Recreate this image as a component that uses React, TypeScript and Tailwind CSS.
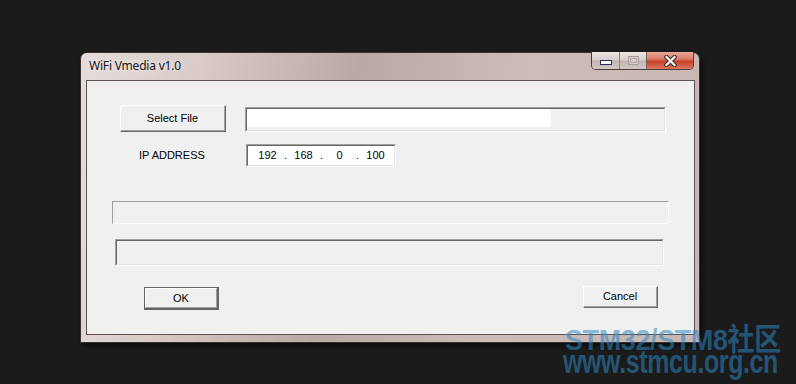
import React from "react";

const ctl = { fontFamily: '"Liberation Sans", Arial, sans-serif' };

function Btn({ label, w, h, isDefault }: { label: string; w: string; h: string; isDefault?: boolean }) {
  if (isDefault) {
    return (
      <div className={`${w} ${h} border border-[#646464] border-r-2 border-b-2 flex`}>
        <div className="flex-1 flex items-center justify-center border-t border-l border-t-white border-l-white border-r border-b border-r-[#a0a0a0] border-b-[#a0a0a0] bg-[#f0f0f0] text-[11px] text-black">
          {label}
        </div>
      </div>
    );
  }
  return (
    <div className={`${w} ${h} flex border-t border-l border-t-white border-l-white border-r border-b border-r-[#696969] border-b-[#696969]`}>
      <div className="flex-1 flex items-center justify-center border-r border-b border-r-[#a0a0a0] border-b-[#a0a0a0] bg-[#f0f0f0] text-[11px] text-black">
        {label}
      </div>
    </div>
  );
}

function Sunken({ className, inner, children }: { className: string; inner: string; children?: React.ReactNode }) {
  return (
    <div className={`${className} flex border-t border-l border-t-[#a0a0a0] border-l-[#a0a0a0] border-r border-b border-r-white border-b-white`}>
      <div className={`flex-1 flex border-t border-l border-t-[#696969] border-l-[#696969] border-r border-b border-r-[#e3e3e3] border-b-[#e3e3e3] ${inner}`}>
        {children}
      </div>
    </div>
  );
}

export default function App() {
  return (
    <div className="w-[796px] h-[384px] bg-[#1b1b1b] relative overflow-hidden pt-[52px] pl-[80px]">
      {/* window */}
      <div className="w-[620px] h-[291px] flex flex-col border border-[#3a3231] rounded-t-[7px] bg-[linear-gradient(100deg,#e6dddb_0%,#d8cbc8_18%,#bba8a4_42%,#cdbdb9_68%,#c7b6b2_100%)] shadow-[2px_3px_4px_rgba(0,0,0,0.6)]">
        {/* title bar */}
        <div className="h-[27px] flex items-start">
          <div
            className="pl-[8px] pt-[4px] text-[12px] text-[#161616] tracking-[-0.2px] [text-shadow:0_0_6px_rgba(255,255,255,0.9)]"
            style={{ fontFamily: '"Noto Sans", "Open Sans", sans-serif' }}
          >
            WiFi Vmedia v1.0
          </div>
          <div className="ml-auto mr-[5px] -mt-[1px] flex h-[18px] border border-t-0 border-[#4a3e3c] rounded-b-[5px] overflow-hidden">
            <div className="w-[28px] flex items-center justify-center border-r border-[#8d7f7c] bg-[linear-gradient(180deg,#ece6e4_0%,#d9cfcd_45%,#c2b4b1_55%,#d3c8c5_100%)]">
              <div className="w-[12px] h-[5px] bg-white border border-[#2c3150] mt-[4px]" />
            </div>
            <div className="w-[27px] flex items-center justify-center border-r border-[#6d5f5c] bg-[linear-gradient(180deg,#ece6e4_0%,#d9cfcd_45%,#c2b4b1_55%,#d3c8c5_100%)]">
              <div className="w-[11px] h-[9px] border border-[#a89c9a] bg-[#d6ccca] flex items-center justify-center">
                <div className="w-[7px] h-[5px] border border-[#b4a8a6]" />
              </div>
            </div>
            <div className="w-[46px] flex items-center justify-center bg-[linear-gradient(180deg,#eba898_0%,#dc7d68_40%,#c9442c_55%,#d45b41_80%,#e07a60_100%)]">
              <svg width="13" height="12" viewBox="0 0 13 12">
                <path d="M2.5 2 L10.5 10 M10.5 2 L2.5 10" stroke="#3a2a2a" strokeWidth="4.2" strokeLinecap="square" />
                <path d="M2.5 2 L10.5 10 M10.5 2 L2.5 10" stroke="#ffffff" strokeWidth="2.2" strokeLinecap="square" />
              </svg>
            </div>
          </div>
        </div>
        {/* client */}
        <div className="ml-[5px] w-[609px] h-[255px] border border-[#5e5251] bg-[#f0f0f0] flex flex-col" style={ctl}>
          {/* row 1 */}
          <div className="mt-[24px] flex items-start">
            <div className="ml-[33px]">
              <Btn label="Select File" w="w-[106px]" h="h-[27px]" />
            </div>
            <Sunken className="ml-[19px] mt-[2px] w-[421px] h-[25px]" inner="bg-[#f0f0f0] items-start">
              <div className="w-[304px] h-[18px] bg-white" />
            </Sunken>
          </div>
          {/* row 2 */}
          <div className="mt-[12px] flex items-center">
            <div className="ml-[52px] w-[107px] text-[11px] text-black">IP ADDRESS</div>
            <Sunken className="w-[150px] h-[23px]" inner="bg-white items-center pl-[7px] text-[11px] text-black">
              <span className="w-[25px] text-center">192</span>
              <span className="w-[11px] text-center">.</span>
              <span className="w-[25px] text-center">168</span>
              <span className="w-[11px] text-center">.</span>
              <span className="w-[25px] text-center">0</span>
              <span className="w-[11px] text-center">.</span>
              <span className="w-[25px] text-center">100</span>
            </Sunken>
          </div>
          {/* bar 1 */}
          <div className="mt-[34px] ml-[25px] w-[557px] h-[23px] border-t border-l border-t-[#a0a0a0] border-l-[#a0a0a0] border-r border-b border-r-white border-b-white bg-[#f0f0f0]" />
          {/* bar 2 */}
          <Sunken className="mt-[15px] ml-[28px] w-[549px] h-[27px]" inner="bg-[#f0f0f0]" />
          {/* buttons */}
          <div className="mt-[20px] flex items-start">
            <div className="ml-[57px] mt-[1px]">
              <Btn label="OK" w="w-[75px]" h="h-[23px]" isDefault />
            </div>
            <div className="ml-[364px]">
              <Btn label="Cancel" w="w-[75px]" h="h-[22px]" />
            </div>
          </div>
        </div>
      </div>

      {/* watermark */}
      <div
        className="absolute left-[565px] top-[325px] flex flex-col font-bold text-[rgba(45,135,195,0.55)] leading-none pointer-events-none"
        style={{ fontFamily: '"Liberation Sans", "Noto Sans CJK SC", Arial, sans-serif' }}
      >
        <div className="text-[27px] tracking-[-0.4px] scale-y-[1.12] origin-top-left whitespace-nowrap">STM32/STM8社区</div>
        <div className="-mt-[6px] -ml-[2px] text-[25px] tracking-[-0.4px] scale-y-[1.3] origin-top-left whitespace-nowrap">www.stmcu.org.cn</div>
      </div>
    </div>
  );
}
